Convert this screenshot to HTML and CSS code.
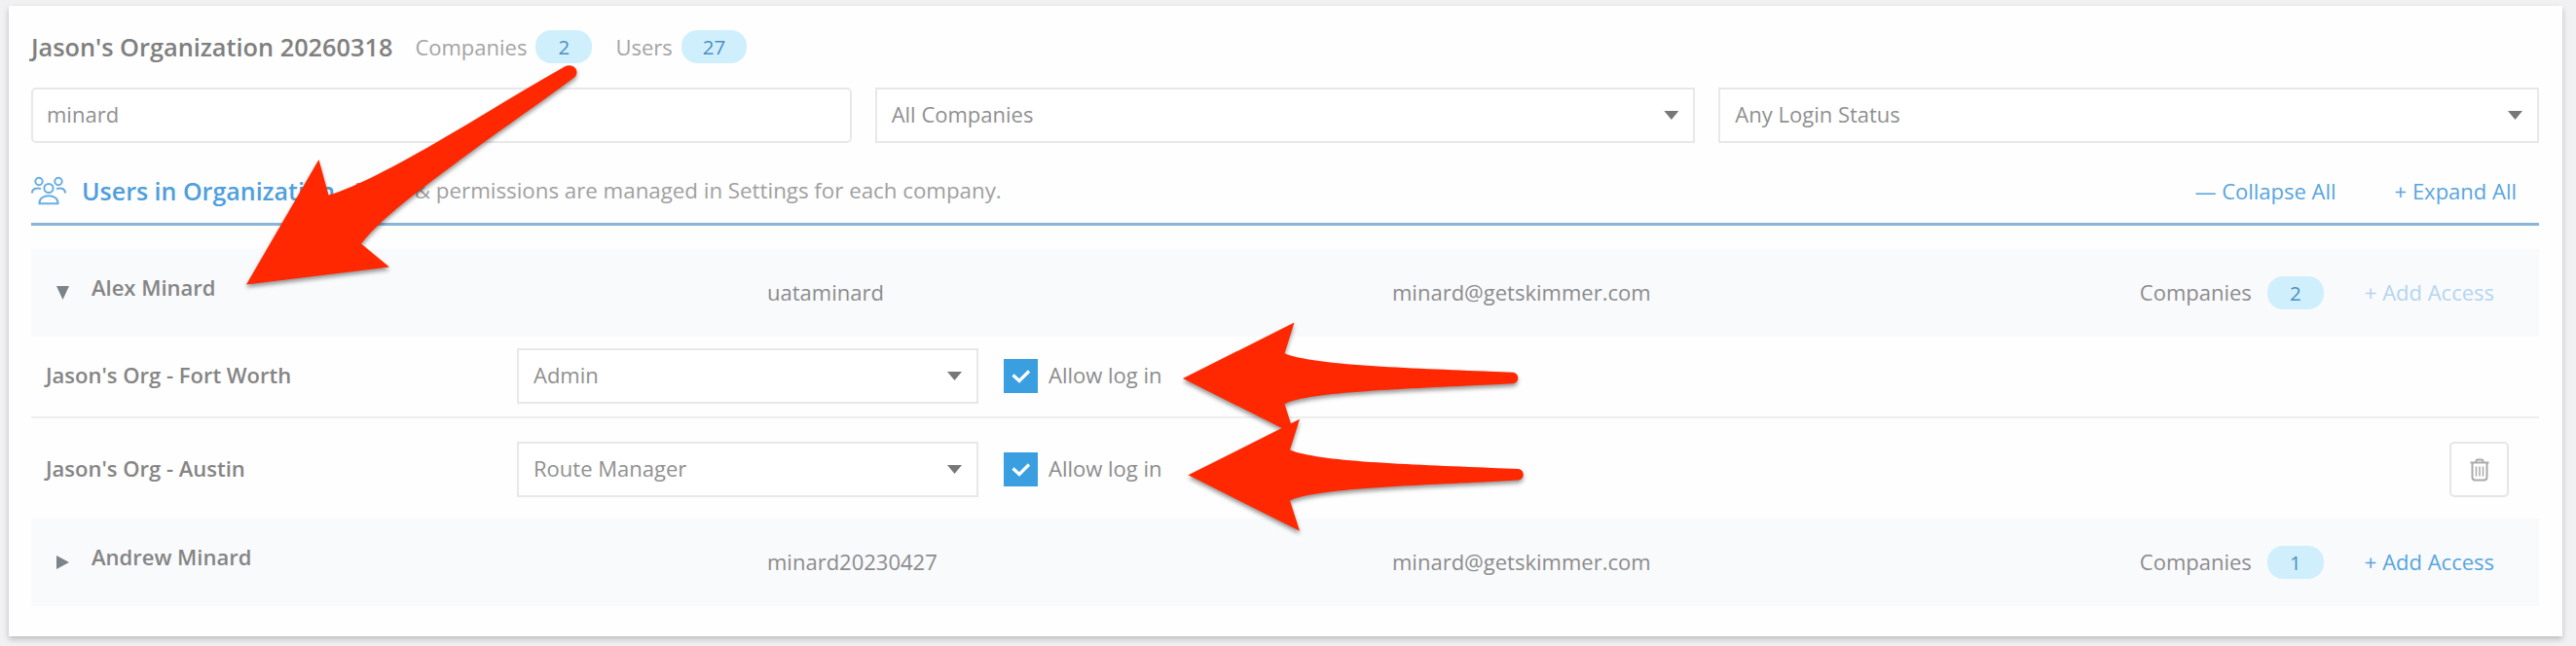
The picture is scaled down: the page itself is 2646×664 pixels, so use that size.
FILE: index.html
```
<!DOCTYPE html>
<html lang="en">
<head>
<meta charset="utf-8">
<title>Organization</title>
<link rel="stylesheet" href="styles.css">
</head>
<body>
<div class="card">
  <div class="org-header">
    <h1>Jason's Organization 20260318</h1>
    <span class="count">Companies <span class="badge">2</span></span>
    <span class="count">Users <span class="badge">27</span></span>
  </div>

  <div class="filters">
    <input type="text" class="field" value="minard">
    <div class="field select">All Companies</div>
    <div class="field select">Any Login Status</div>
  </div>

  <div class="section-header">
    <svg class="icon-users" width="36" height="30" viewBox="0 0 36 30">
      <circle cx="8" cy="5.5" r="3.7"/>
      <circle cx="28" cy="5.5" r="3.7"/>
      <circle cx="18" cy="12.5" r="4.6"/>
      <path d="M1 17.500C1 13 5 11.500 10 13M35 17.500C35 13 31 11.500 26 13"/>
      <path d="M8.500 28.200c-.8-10.500 19.800-10.500 19 0z"/>
    </svg>
    <h2>Users in Organization</h2>
    <span class="note">Roles &amp; permissions are managed in Settings for each company.</span>
    <a class="link collapse">— Collapse All</a>
    <a class="link">+ Expand All</a>
  </div>

  <div class="user">
    <span class="caret down"></span>
    <span class="name">Alex Minard</span>
    <span class="login">uataminard</span>
    <span class="email">minard@getskimmer.com</span>
    <span class="label">Companies</span>
    <span class="badge">2</span>
    <a class="link disabled">+ Add Access</a>
  </div>

  <div class="company">
    <span class="company-name">Jason's Org - Fort Worth</span>
    <div class="field select">Admin</div>
    <span class="check"><svg width="35" height="35" viewBox="0 0 35 35"><path d="M9.500 16.500l6.500 6L26 12.500"/></svg></span>
    <span class="check-label">Allow log in</span>
  </div>
  <div class="company last">
    <span class="company-name">Jason's Org - Austin</span>
    <div class="field select">Route Manager</div>
    <span class="check"><svg width="35" height="35" viewBox="0 0 35 35"><path d="M9.500 16.500l6.500 6L26 12.500"/></svg></span>
    <span class="check-label">Allow log in</span>
    <button class="delete" aria-label="Remove">
      <svg width="20" height="24" viewBox="0 0 20 24">
        <path d="M.5 4.500h19M6.500 4V3q0-1.500 1.500-1.500h4q1.500 0 1.500 1.500v1M2.500 5v14.500q0 3 3 3h9q3 0 3-3V5"/>
        <path class="thin" d="M6.500 8.500v10M10 8.500v10M13.500 8.500v10"/>
      </svg>
    </button>
  </div>

  <div class="user">
    <span class="caret right"></span>
    <span class="name">Andrew Minard</span>
    <span class="login">minard20230427</span>
    <span class="email">minard@getskimmer.com</span>
    <span class="label">Companies</span>
    <span class="badge">1</span>
    <a class="link">+ Add Access</a>
  </div>
</div>

<!-- annotation arrows -->
<svg class="arrows" width="2646" height="664" viewBox="0 0 2646 664">
  <path d="M253 292.500L327.500 164L337.500 200.500C365 193 410 168 442 150C490 122 535 94 580 68.500C588 64 597 72.500 590 79.500C560 102 525 126 492 150C445 185 395 220 371 250.500L400 274.500Z"/>
  <path id="arrow" d="M1215 389L1329.500 331.500L1319.500 363.200C1352 376.500 1460 378.500 1554 382.800C1561 383.500 1561 393.500 1554 394.200C1460 399.500 1348 401.500 1319.500 415.200L1329.500 446.500Z"/>
  <use href="#arrow" x="5.500" y="99.300"/>
</svg>
</body>
</html>
```
FILE: styles.css
```
* { box-sizing: border-box; }
body {
  margin: 0;
  height: 664px;
  padding: 6px 14px 10px 9px;
  overflow: hidden;
  background: #f1f1f3;
  color: #8c8c8c;
  font: 22px/30px "Open Sans", sans-serif;
}
.card {
  height: 648px;
  padding: 24px 24px 0 23px;
  background: #fefefe;
  box-shadow: 0 3px 6px rgba(0,0,0,.22);
}

.org-header { display: flex; align-items: center; height: 36px; padding-bottom: 1px; }
h1 { margin: 0 23px 0 0; font-size: 25.300px; font-weight: 600; color: #808080; }
.count { display: flex; align-items: center; gap: 9px; margin-right: 24px; color: #a4a4a4; }
.badge {
  min-width: 58px;
  height: 34px;
  padding: 0 22px;
  border-radius: 16px;
  background: #d0effd;
  color: #4c8fbf;
  font-size: 20.500px;
  font-weight: 500;
  line-height: 34px;
  text-align: center;
}

.filters { display: grid; grid-template-columns: repeat(3, 1fr); gap: 24px; margin-top: 24px; }
.field {
  height: 57px;
  padding: 0 15px 3px;
  border: 2px solid #e8e8e8;
  background: #fff;
  color: #909090;
  font: 22px/50px "Open Sans", sans-serif;
}
input.field { padding-left: 14px; border-radius: 5px; }
.select { display: flex; justify-content: space-between; align-items: center; }
.select::after {
  content: "";
  width: 15px;
  height: 9px;
  margin-top: 3px;
  background: #777;
  clip-path: polygon(0 0, 100% 0, 50% 100%);
}

.section-header {
  display: flex;
  align-items: center;
  height: 85px;
  padding: 25px 23px 10px 0;
  border-bottom: 3px solid #87b6da;
}
.icon-users { margin-right: 16px; fill: none; stroke: #69aee2; stroke-width: 2; }
h2 { margin: 0 20px 0 0; font-size: 25px; font-weight: 600; color: #4f9fdd; }
.note { font-size: 22.300px; color: #a0a0a0; }
.link { color: #58a5e0; }
.link.collapse { margin: 0 60px 0 auto; }
.link.disabled { color: #b5d5ef; }

.user { display: flex; align-items: center; height: 90px; background: #f9fafc; }
.section-header + .user { margin-top: 24px; }
.caret { width: 13px; height: 14px; margin: 0 23px 0 26px; background: #7c838a; }
.down { clip-path: polygon(0 0, 100% 0, 50% 100%); }
.right { clip-path: polygon(0 0, 100% 50%, 0 100%); }
.name { width: 694px; padding-bottom: 12px; font-weight: 600; color: #858585; }
.login { width: 642px; }
.email { flex: 1; }
.login, .email, .label, .user .link { padding-bottom: 3px; }
.user .badge { margin: 0 42px 0 16px; }
.user .link { margin-right: 46px; }

.company { display: flex; align-items: center; height: 84px; padding: 0 31px 1px 15px; border-bottom: 2px solid #eee; }
.company.last { height: 103px; padding-top: 3px; padding-bottom: 1px; border: 0; }
.company-name { width: 484px; font-weight: 600; color: #858585; }
.company-name, .check-label { padding-bottom: 3px; }
.company .select { width: 474px; }
.check { width: 35px; height: 35px; margin: 0 11px 0 26px; background: #3a9fe0; }
.check svg { display: block; fill: none; stroke: #fff; stroke-width: 3.200; }
.delete {
  display: flex;
  align-items: center;
  justify-content: center;
  width: 61px;
  height: 57px;
  margin-left: auto;
  padding: 0;
  border: 2px solid #e6e6e6;
  border-radius: 5px;
  background: #fff;
}
.delete svg { fill: none; stroke: #aaa; stroke-width: 2; }
.delete .thin { stroke-width: 1.500; }

.arrows {
  position: absolute;
  top: 0;
  left: 0;
  fill: #ff2800;
  filter: drop-shadow(0 3px 2px rgba(0,0,0,.4));
}
```
